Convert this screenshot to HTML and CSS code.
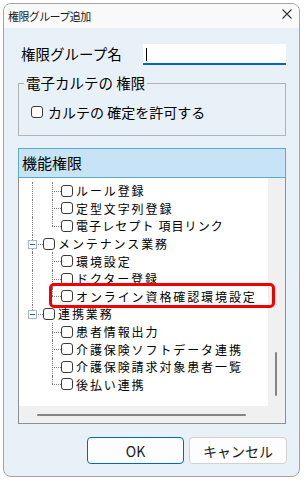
FILE: index.html
```html
<!DOCTYPE html>
<html lang="ja">
<head>
<meta charset="utf-8">
<link rel="stylesheet" href="styles.css">
</head>
<body>
<div class="window">
  <div class="titlebar">
    <span class="title">権限グループ追加</span>
    <svg class="close" width="10" height="10" viewBox="0 0 10 10"><path d="M0.5 0.5 L9.5 9.5 M9.5 0.5 L0.5 9.5" stroke="#333" stroke-width="1.1" fill="none"/></svg>
  </div>
  <div class="content">
    <div class="name-row">
      <span class="name-label">権限グループ名</span>
      <div class="text-input"><span class="caret"></span></div>
    </div>
    <fieldset class="group">
      <legend class="group-legend">電子カルテの 権限</legend>
      <div class="check-row"><span class="cb"></span><span>カルテの 確定を許可する</span></div>
    </fieldset>
    <div class="tree-panel">
      <div class="tree-header">機能権限</div>
      <div class="tree-body">
        <div class="tree-list">
          <div class="row l2"><i class="v0"></i><i class="v1"></i><i class="h2"></i><span class="cb"></span><span class="label">ルール登録</span></div>
          <div class="row l2"><i class="v0"></i><i class="v1"></i><i class="h2"></i><span class="cb"></span><span class="label">定型文字列登録</span></div>
          <div class="row l2"><i class="v0"></i><i class="v1 half"></i><i class="h2"></i><span class="cb"></span><span class="label narrow">電子レセプト 項目リンク</span></div>
          <div class="row l1"><i class="v0"></i><i class="h1"></i><b class="minus"></b><span class="cb"></span><span class="label">メンテナンス業務</span></div>
          <div class="row l2"><i class="v0"></i><i class="v1"></i><i class="h2"></i><span class="cb"></span><span class="label">環境設定</span></div>
          <div class="row l2"><i class="v0"></i><i class="v1"></i><i class="h2"></i><span class="cb"></span><span class="label">ドクター登録</span></div>
          <div class="row l2"><i class="v0"></i><i class="v1 half"></i><i class="h2"></i><span class="cb"></span><span class="label">オンライン資格確認環境設定</span><span class="highlight"></span></div>
          <div class="row l1"><i class="v0 half"></i><i class="h1"></i><b class="minus"></b><span class="cb"></span><span class="label">連携業務</span></div>
          <div class="row l2"><i class="v1"></i><i class="h2"></i><span class="cb"></span><span class="label">患者情報出力</span></div>
          <div class="row l2"><i class="v1"></i><i class="h2"></i><span class="cb"></span><span class="label">介護保険ソフトデータ連携</span></div>
          <div class="row l2"><i class="v1"></i><i class="h2"></i><span class="cb"></span><span class="label">介護保険請求対象患者一覧</span></div>
          <div class="row l2"><i class="v1 half"></i><i class="h2"></i><span class="cb"></span><span class="label">後払い連携</span></div>
        </div>
        <div class="vscroll"><span class="vthumb"></span></div>
        <div class="hscroll"><span class="hthumb"></span></div>
        <div class="corner"></div>
      </div>
    </div>
    <div class="buttons">
      <div class="btn btn-primary">OK</div>
      <div class="btn">キャンセル</div>
    </div>
  </div>
</div>
</body>
</html>
```

FILE: styles.css
```css
* { box-sizing: border-box; }
html, body { margin: 0; padding: 0; background: #ffffff; }
body {
  font-family: "Noto Sans CJK JP", "Noto Sans", sans-serif;
  color: #000;
}
.window {
  margin: 3px 0 0 3px;
  width: 297px;
  height: 474px;
  border: 1px solid #a3a3a3;
  border-radius: 8px;
  overflow: hidden;
  background: #e9f1f8;
  display: flex;
  flex-direction: column;
}
.titlebar {
  height: 24px;
  background: #f9f9f9;
  display: flex;
  align-items: center;
  justify-content: space-between;
  padding: 0 7px 0 4px;
}
.title {
  font-size: 11px;
  letter-spacing: -0.6px;
  line-height: 14px;
  color: #1a1a1a;
}
.close { display: block; margin-top: -4px; }
.content {
  padding: 16px 13px 0 14px;
  display: flex;
  flex-direction: column;
}
.name-row {
  display: flex;
  align-items: center;
  height: 21px;
}
.name-label {
  width: 125px;
  padding-left: 3px;
  font-size: 14.5px;
  line-height: 18px;
  margin-top: -2px;
}
.text-input {
  width: 144px;
  height: 21px;
  background: #ffffff;
  border-bottom: 2px solid #0067c0;
  display: flex;
  align-items: center;
  padding-left: 3px;
}
.caret {
  display: block;
  width: 1px;
  height: 13px;
  background: #000;
  margin-top: 1px;
}
.group {
  margin: 9px 0 0 0;
  padding: 0 0 14px 5px;
  border: 1px solid #aeb3b8;
  min-width: 0;
}
.group-legend {
  padding: 0 2px;
  font-size: 14.5px;
  line-height: 18px;
}
.check-row {
  display: flex;
  align-items: center;
  height: 18px;
  margin: 11px 0 0 7px;
  font-size: 14px;
  line-height: 18px;
}
.check-row .cb { margin-right: 5px; }
.cb {
  display: inline-block;
  flex: none;
  width: 12px;
  height: 12px;
  border: 1px solid #3a3a3a;
  border-radius: 3px;
  background: #ffffff;
}
.tree-panel {
  margin-top: 12px;
  width: 268px;
  display: flex;
  flex-direction: column;
}
.tree-header {
  height: 30px;
  background: #c6e4f5;
  border: 1px solid #5ea8c8;
  padding-left: 3px;
  font-size: 15px;
  line-height: 28px;
}
.tree-body {
  height: 246px;
  border: 1px solid #8e8e8e;
  border-top: none;
  display: grid;
  grid-template-columns: 1fr 17px;
  grid-template-rows: 1fr 17px;
  background: #f0f0f0;
}
.tree-list {
  position: relative;
  background: #ffffff;
  padding-top: 4px;
  z-index: 2;
}
.row {
  position: relative;
  height: 17.6px;
  display: flex;
  align-items: center;
  font-size: 12px;
  line-height: 15px;
  white-space: nowrap;
}
.row.l1 { padding-left: 24px; }
.row.l2 { padding-left: 42px; }
.row .cb { margin-right: 2px; }
.label {
  display: block;
  height: 15px;
  line-height: 15px;
  letter-spacing: 1.9px;
  padding-left: 1px;
}
.label.narrow { letter-spacing: 1.1px; }
.row i {
  position: absolute;
  display: block;
}
.v0 { left: 13px; top: 0; bottom: 0; border-left: 1px dotted #7a7a7a; }
.v1 { left: 33px; top: 0; bottom: 0; border-left: 1px dotted #7a7a7a; }
.row i.half { bottom: 50%; }
.h2 { left: 33px; top: 50%; width: 9px; border-top: 1px dotted #7a7a7a; }
.h1 { left: 17px; top: 50%; width: 7px; border-top: 1px dotted #7a7a7a; }
.minus {
  position: absolute;
  left: 9px;
  top: calc(50% - 4px);
  width: 9px;
  height: 9px;
  background: #ffffff;
  border: 1px solid #a9b8c8;
}
.minus::after {
  content: "";
  position: absolute;
  left: 1px;
  top: 3px;
  width: 5px;
  height: 1px;
  background: #2060b0;
}
.highlight {
  position: absolute;
  left: 30px;
  top: -4.6px;
  width: 226px;
  height: 25px;
  border: 3px solid #f00000;
  border-radius: 5px;
  z-index: 3;
}
.vscroll {
  position: relative;
  background: #f0f0f0;
}
.vthumb {
  position: absolute;
  left: 7px;
  top: 174px;
  width: 2px;
  height: 44px;
  background: #858585;
  border-radius: 1px;
}
.hscroll {
  position: relative;
  background: #f0f0f0;
}
.hthumb {
  position: absolute;
  left: 18px;
  top: 8px;
  width: 209px;
  height: 2px;
  background: #858585;
  border-radius: 1px;
}
.corner { background: #f0f0f0; }
.buttons {
  margin-top: 13px;
  display: flex;
  justify-content: flex-end;
  gap: 5px;
  margin-right: -1px;
}
.btn {
  width: 98px;
  height: 27px;
  border: 1px solid #d2d2d2;
  border-radius: 4px;
  background: #fdfdfd;
  display: flex;
  align-items: center;
  justify-content: center;
  font-size: 14px;
  line-height: 18px;
  color: #1a1a1a;
}
.btn-primary {
  width: 97px;
  border-color: #0067c0;
}
```
